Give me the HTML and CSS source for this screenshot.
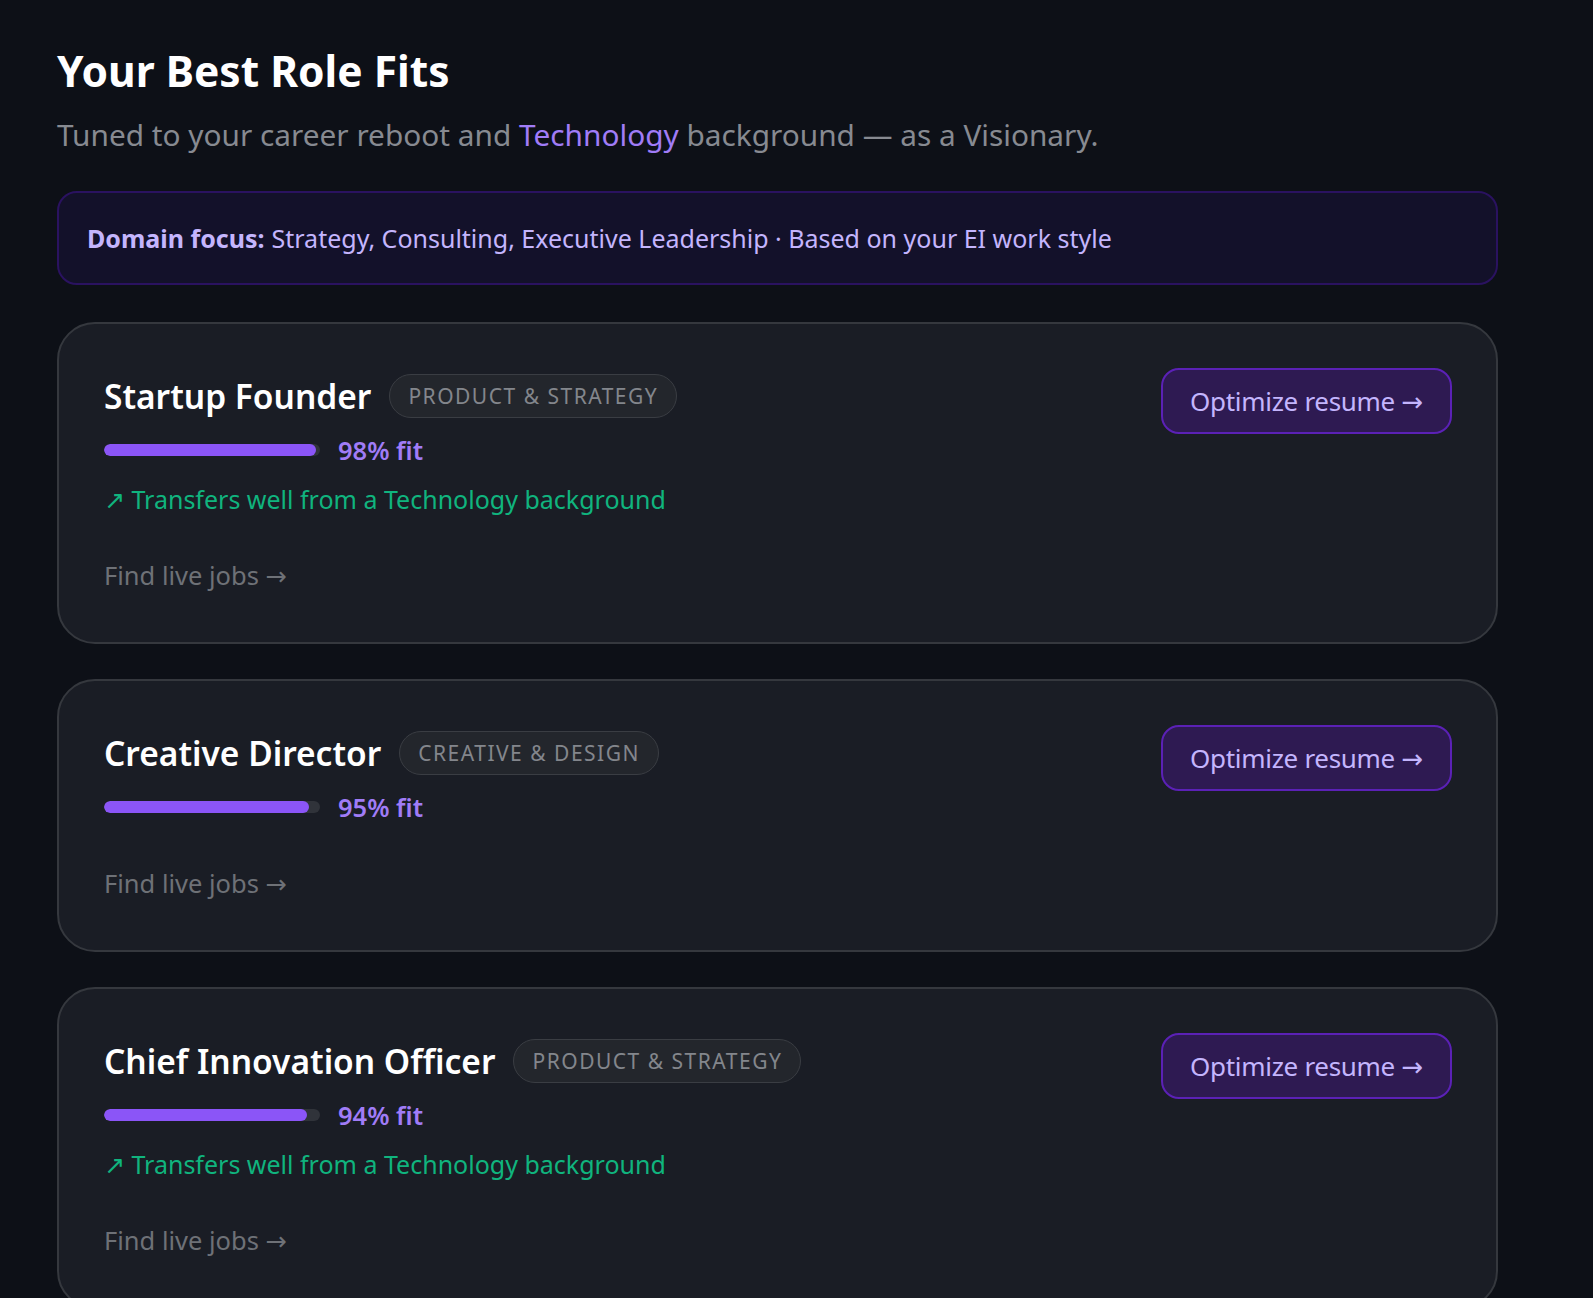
FILE: index.html
```html
<!DOCTYPE html>
<html lang="en">
<head>
<meta charset="utf-8">
<title>Your Best Role Fits</title>
<link rel="stylesheet" href="styles.css">
</head>
<body>
<main class="page">
  <h1 class="title">Your Best Role Fits</h1>
  <p class="subtitle">Tuned to your career reboot and <span class="accent">Technology</span> background — as a Visionary.</p>

  <div class="focus"><strong>Domain focus:</strong> Strategy, Consulting, Executive Leadership · Based on your EI work style</div>

  <section class="cards">
    <article class="card">
      <div class="card-main">
        <div class="head">
          <h2 class="role">Startup Founder</h2>
          <span class="tag">Product &amp; Strategy</span>
        </div>
        <div class="fit">
          <div class="bar"><div class="fill" style="width:98%"></div></div>
          <span class="pct">98% fit</span>
        </div>
        <p class="transfer">↗ Transfers well from a Technology background</p>
        <a class="jobs" href="#">Find live jobs →</a>
      </div>
      <button class="optimize" type="button">Optimize resume →</button>
    </article>

    <article class="card">
      <div class="card-main">
        <div class="head">
          <h2 class="role">Creative Director</h2>
          <span class="tag">Creative &amp; Design</span>
        </div>
        <div class="fit">
          <div class="bar"><div class="fill" style="width:95%"></div></div>
          <span class="pct">95% fit</span>
        </div>
        <a class="jobs" href="#">Find live jobs →</a>
      </div>
      <button class="optimize" type="button">Optimize resume →</button>
    </article>

    <article class="card">
      <div class="card-main">
        <div class="head">
          <h2 class="role">Chief Innovation Officer</h2>
          <span class="tag">Product &amp; Strategy</span>
        </div>
        <div class="fit">
          <div class="bar"><div class="fill" style="width:94%"></div></div>
          <span class="pct">94% fit</span>
        </div>
        <p class="transfer">↗ Transfers well from a Technology background</p>
        <a class="jobs" href="#">Find live jobs →</a>
      </div>
      <button class="optimize" type="button">Optimize resume →</button>
    </article>
  </section>
</main>
</body>
</html>
```

FILE: styles.css
```css
* { box-sizing: border-box; }

html, body {
  margin: 0;
  padding: 0;
  background: #0d1017;
}

body {
  font-family: "Noto Sans", "Open Sans", "DejaVu Sans", sans-serif;
  color: #ffffff;
  height: 1298px;
  overflow: hidden;
}

.page {
  width: 1441px;
  margin-left: 57px;
  padding-top: 39px;
}

.title {
  margin: 0;
  font-size: 42.5px;
  line-height: 64px;
  font-weight: 700;
  color: #ffffff;
}

.subtitle {
  margin: 12px 0 0;
  font-size: 29.8px;
  line-height: 40px;
  color: #878a91;
}

.accent { color: #a07cf7; }

.focus {
  margin-top: 36px;
  height: 94px;
  border: 2px solid #2a1260;
  background: #13112a;
  border-radius: 20px;
  padding: 0 28px;
  display: flex;
  align-items: center;
  font-size: 25px;
  color: #c4b5fd;
}

.focus strong { font-weight: 700; margin-right: 7px; }

.cards {
  margin-top: 37px;
  display: flex;
  flex-direction: column;
  gap: 35px;
}

.card {
  display: flex;
  align-items: flex-start;
  justify-content: space-between;
  background: #1a1d25;
  border: 2px solid #35383e;
  border-radius: 38px;
  padding: 44px 44px 50px 45px;
}

.card-main {
  display: flex;
  flex-direction: column;
  align-items: flex-start;
}

.head {
  display: flex;
  align-items: center;
  gap: 18px;
  height: 56px;
}

.role {
  margin: 0;
  font-size: 33.5px;
  font-weight: 600;
  color: #ffffff;
}

.tag {
  display: inline-flex;
  align-items: center;
  height: 44px;
  padding: 0 18px;
  border: 1.5px solid #3a3d43;
  background: #23262c;
  border-radius: 999px;
  font-size: 21px;
  letter-spacing: 1.5px;
  text-transform: uppercase;
  color: #83868c;
}

.fit {
  display: flex;
  align-items: center;
  gap: 18px;
  margin-top: 9px;
  height: 34px;
}

.bar {
  width: 216px;
  height: 12px;
  border-radius: 999px;
  background: #30333a;
  overflow: hidden;
}

.fill {
  height: 100%;
  border-radius: 999px;
  background: #8b55f7;
}

.pct {
  font-size: 25.5px;
  font-weight: 600;
  color: #a07cf7;
}

.transfer {
  margin: 15px 0 0;
  font-size: 25px;
  line-height: 34px;
  color: #10b47e;
}

.jobs {
  margin-top: 42px;
  font-size: 25.5px;
  line-height: 34px;
  color: #6e7177;
  text-decoration: none;
}

.optimize {
  margin-top: 0;
  width: 291px;
  height: 66px;
  border: 2px solid #5b21b6;
  background: #2e1a52;
  border-radius: 18px;
  font-family: inherit;
  font-size: 26px;
  color: #c4b5fd;
  letter-spacing: -0.3px;
  cursor: pointer;
}
```
